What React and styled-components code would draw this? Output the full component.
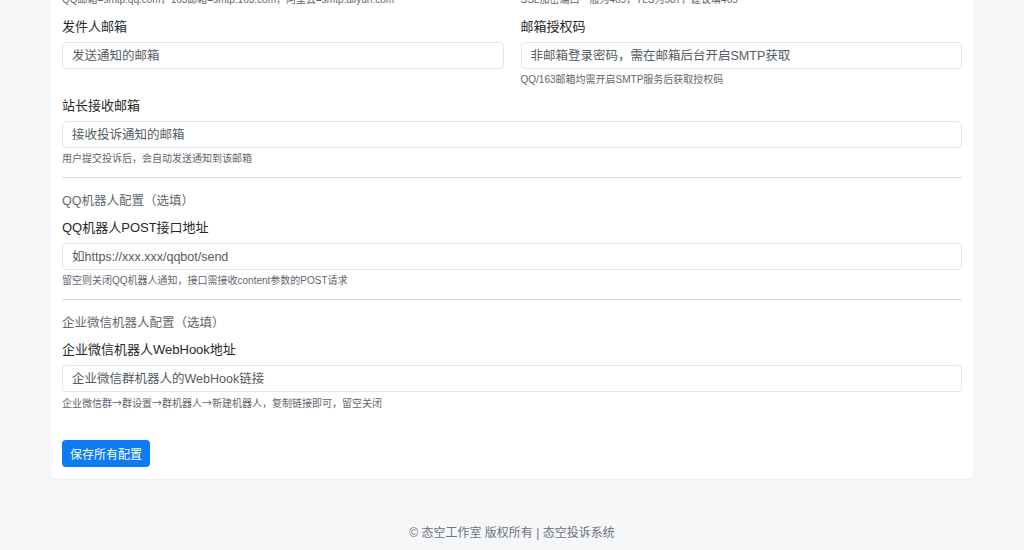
import React from "react";
import styled, { createGlobalStyle } from "styled-components";

const Global = createGlobalStyle`
  html, body { margin: 0; padding: 0; background: #f6f7f9; overflow: hidden; }
  body { font-family: "Liberation Sans", "Noto Sans CJK SC", sans-serif; color: #212529; }
`;

const Page = styled.div`
  margin-top: -7px;
  padding: 0 51px;
`;
const Card = styled.div`
  background: #fff;
  border-radius: 0 0 5px 5px;
  box-shadow: 0 1px 2px rgba(0,0,0,0.05);
  padding: 0 11px 12px;
`;
const Row = styled.div`
  display: grid;
  grid-template-columns: 1fr 1fr;
  column-gap: 17px;
  margin-top: ${p => p.$mt ?? 0}px;
`;
const Field = styled.div`
  margin-bottom: ${p => p.$mb ?? 10}px;
`;
const Label = styled.div`
  font-size: 13px;
  font-weight: 400;
  line-height: 18px;
  margin-bottom: 6px;
  color: #25282b;
`;
const Input = styled.input`
  display: block;
  box-sizing: border-box;
  width: 100%;
  height: 27px;
  border: 1px solid #e3e5e8;
  border-radius: 4px;
  padding: 0 9px;
  font-family: inherit;
  font-size: 12.5px;
  color: #212529;
  background: #fff;
  &::placeholder { color: #555b61; }
`;
const Help = styled.div`
  font-size: 10px;
  line-height: 14px;
  color: #5f666d;
  margin-top: ${p => p.$mt ?? 4}px;
`;
const Arrow = styled.span`
  font-family: "Noto Sans CJK SC", sans-serif;
`;
const Divider = styled.hr`
  border: 0;
  border-top: 1px solid #d6d8db;
  margin: 0 0 14px;
`;
const SectionTitle = styled.div`
  font-size: 12.5px;
  line-height: 18px;
  color: #62686e;
  margin-bottom: 9px;
`;
const Button = styled.button`
  margin-top: 29px;
  height: 27px;
  padding: 0 8px;
  background: #0d7cf2;
  color: #fff;
  border: 0;
  border-radius: 4px;
  font-family: inherit;
  font-size: 12px;
`;
const Footer = styled.div`
  text-align: center;
  font-size: 12px;
  color: #6c737a;
  margin-top: 46px;
  line-height: 16px;
`;

export default function App() {
  return (
    <>
      <Global />
      <Page>
        <Card>
          <Row>
            <Help $mt={0}>QQ邮箱=smtp.qq.com，163邮箱=smtp.163.com，阿里云=smtp.aliyun.com</Help>
            <Help $mt={0}>SSL加密端口一般为465，TLS为587，建议填465</Help>
          </Row>
          <Row $mt={11}>
            <Field>
              <Label>发件人邮箱</Label>
              <Input placeholder="发送通知的邮箱" />
            </Field>
            <Field>
              <Label>邮箱授权码</Label>
              <Input placeholder="非邮箱登录密码，需在邮箱后台开启SMTP获取" />
              <Help>QQ/163邮箱均需开启SMTP服务后获取授权码</Help>
            </Field>
          </Row>
          <Field $mb={11}>
            <Label>站长接收邮箱</Label>
            <Input placeholder="接收投诉通知的邮箱" />
            <Help>用户提交投诉后，会自动发送通知到该邮箱</Help>
          </Field>
          <Divider />
          <SectionTitle>QQ机器人配置（选填）</SectionTitle>
          <Field $mb={11}>
            <Label>QQ机器人POST接口地址</Label>
            <Input placeholder="如https://xxx.xxx/qqbot/send" />
            <Help>留空则关闭QQ机器人通知，接口需接收content参数的POST请求</Help>
          </Field>
          <Divider />
          <SectionTitle>企业微信机器人配置（选填）</SectionTitle>
          <Field $mb={0}>
            <Label>企业微信机器人WebHook地址</Label>
            <Input placeholder="企业微信群机器人的WebHook链接" />
            <Help>
              企业微信群<Arrow>→</Arrow>群设置<Arrow>→</Arrow>群机器人<Arrow>→</Arrow>新建机器人，复制链接即可，留空关闭
            </Help>
          </Field>
          <Button>保存所有配置</Button>
        </Card>
        <Footer>© 态空工作室 版权所有 | 态空投诉系统</Footer>
      </Page>
    </>
  );
}
